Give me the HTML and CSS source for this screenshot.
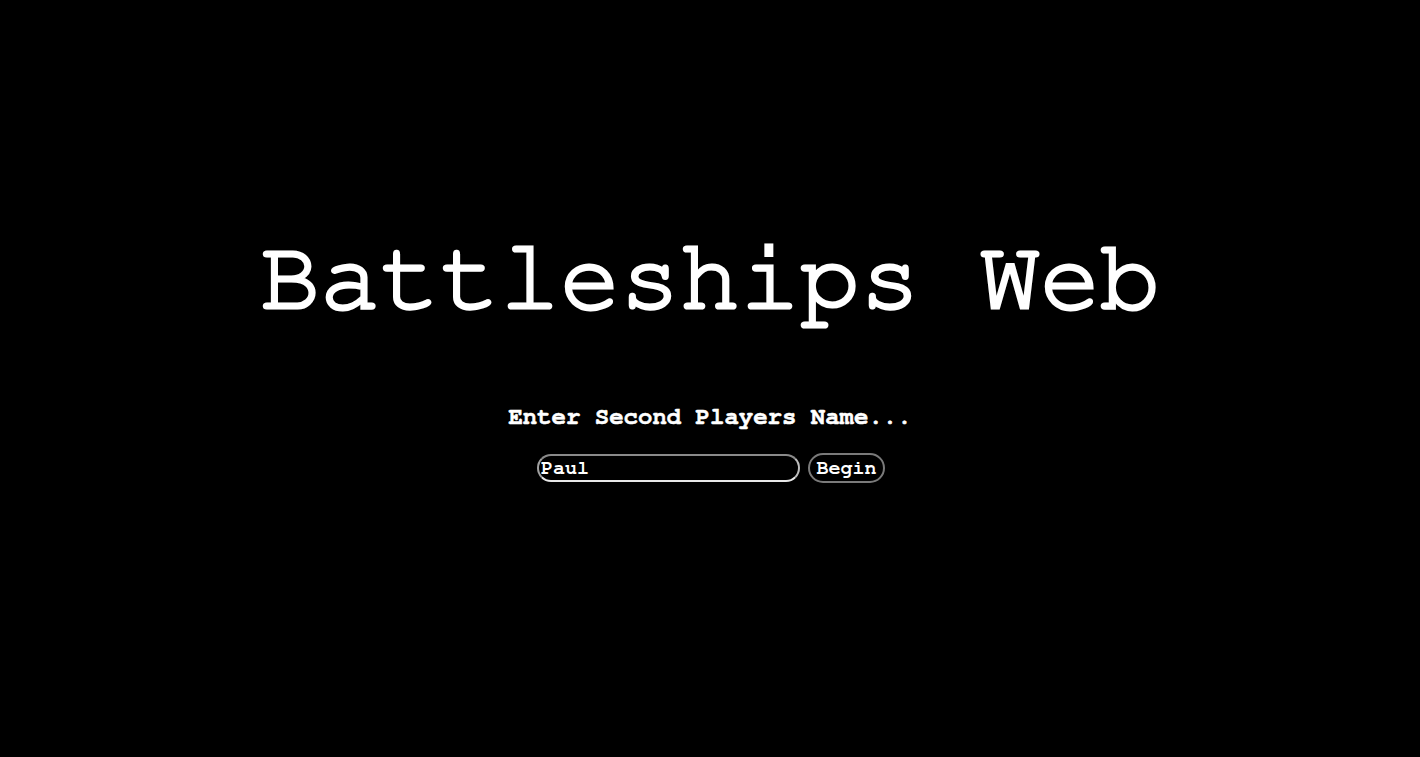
FILE: index.html
```html
<!DOCTYPE html>
<html>
<head>
<meta charset="utf-8">
<title>Battleships Web</title>
<link rel="stylesheet" href="styles.css">
</head>
<body>
<main class="screen">
  <h1 class="title">Battleships Web</h1>
  <p class="prompt">Enter Second Players Name...</p>
  <form class="entry">
    <input class="name-input" type="text" value="Paul">
    <button class="begin-btn" type="button">Begin</button>
  </form>
</main>
</body>
</html>
```
FILE: styles.css
```css
html, body {
  margin: 0;
  padding: 0;
  background: #000;
  height: 100%;
}
.screen {
  display: flex;
  flex-direction: column;
  align-items: center;
  padding-top: 228px;
  font-family: "Nimbus Mono PS", "Nimbus Mono L", "FreeMono", "Courier 10 Pitch", "Liberation Mono", monospace;
  color: #fff;
}
.title {
  margin: 0;
  font-size: 100px;
  line-height: 100px;
  font-weight: normal;
  -webkit-text-stroke: 3px #fff;
}
.prompt {
  margin: 77px 0 0;
  font-size: 24px;
  line-height: 24px;
  font-weight: bold;
  -webkit-text-stroke: 0.5px #fff;
}
.entry {
  margin-top: 24px;
  padding-left: 2px;
  display: flex;
  align-items: center;
  gap: 8px;
}
.name-input {
  box-sizing: border-box;
  width: 263px;
  height: 28px;
  padding: 0 1px 0 2px;
  border: 2px solid;
  border-color: #8a8a8a #bdbdbd #e8e8e8 #a0a0a0;
  border-radius: 14px;
  background: #000;
  color: #fff;
  font-family: "Nimbus Mono PS", "Nimbus Mono L", "FreeMono", "Courier 10 Pitch", "Liberation Mono", monospace;
  font-size: 20px;
  font-weight: bold;
  outline: none;
}
.begin-btn {
  box-sizing: border-box;
  width: 77px;
  height: 30px;
  padding: 0;
  border: 2px solid #7a7a7a;
  border-radius: 15px;
  background: #000;
  color: #fff;
  font-family: "Nimbus Mono PS", "Nimbus Mono L", "FreeMono", "Courier 10 Pitch", "Liberation Mono", monospace;
  font-size: 20px;
  font-weight: bold;
}
```
